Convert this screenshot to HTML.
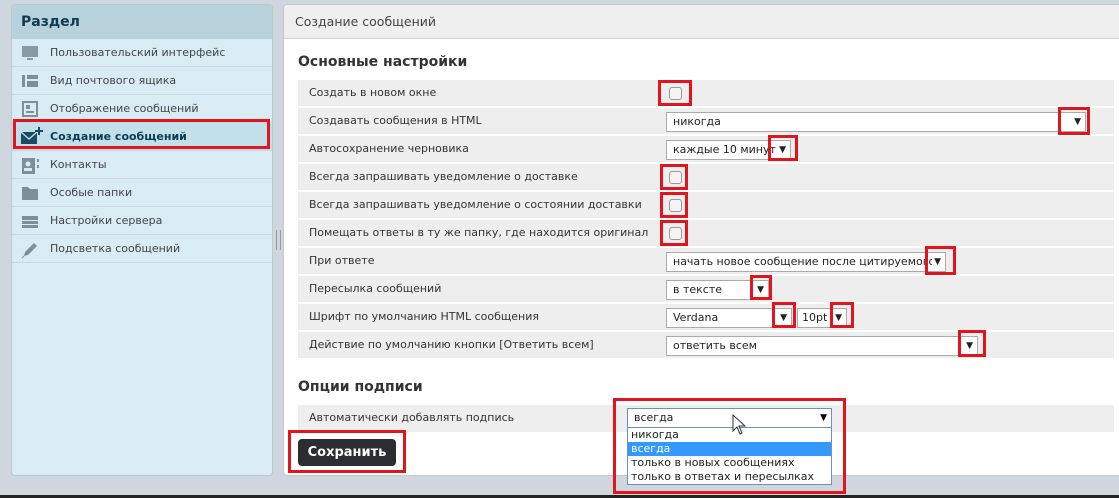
<!DOCTYPE html>
<html><head><meta charset="utf-8"><style>
*{box-sizing:border-box;margin:0;padding:0}
body{width:1119px;height:498px;background:#cfd6de;font-family:Verdana,"DejaVu Sans","Liberation Sans",sans-serif;font-size:11px;color:#333;position:relative;overflow:hidden}
.a{position:absolute}
#left{left:11px;top:4px;width:262px;height:472px;background:#d9ecf3;border:1px solid #b9c9d3;border-radius:4px;overflow:hidden}
#left .h{height:34px;background:#b8d2dc;font-weight:bold;font-size:14px;color:#0d3b52;padding:9px 9px}
.li{height:28px;border-bottom:1px solid #c4d9e2;padding-left:38px;line-height:28px;color:#444;position:relative;white-space:nowrap}
.li svg{position:absolute;left:9px;top:6px}
#right{left:283px;top:4px;width:840px;height:472px;background:#fff;border:1px solid #c2c8d0;border-radius:4px;overflow:hidden}
#right .h{height:34px;background:#efefef;border-bottom:1px solid #d4d4d4;padding:9px 11px;font-size:12.5px;color:#444}
h3{position:absolute;font-size:14px;color:#333;font-weight:bold}
.row{position:absolute;left:298px;width:816px;height:26px;background:#eee;line-height:26px;padding-left:11px;color:#333;white-space:nowrap}
.sel{position:absolute;height:20px;background:#fff;border:1px solid #aaa;line-height:18px;padding-left:6px;padding-right:18px;font-size:11px;color:#222;white-space:nowrap;overflow:hidden}
.sel i{position:absolute;right:4px;top:0;font-style:normal;font-size:9px;background:#fff;padding-left:2px}
.cb{position:absolute;width:13px;height:13px;border:1px solid #999;border-radius:3px;background:#f4f4f4}
.r{position:absolute;border:3px solid #e0161f}
</style></head><body>
<div id="left" class="a"><div class="h">Раздел</div>
<div class="li"><svg width="18" height="16"><rect x="1" y="1" width="16" height="11" fill="#8a9aa3"/><rect x="6" y="13" width="6" height="2" fill="#8a9aa3"/></svg>Пользовательский интерфейс</div>
<div class="li"><svg width="18" height="16"><rect x="1" y="2" width="3" height="12" fill="#7f8f98"/><rect x="6" y="2" width="11" height="4" fill="#7f8f98"/><rect x="6" y="8" width="11" height="6" fill="#7f8f98"/></svg>Вид почтового ящика</div>
<div class="li"><svg width="18" height="16"><rect x="2" y="1" width="14" height="14" fill="none" stroke="#7f8f98" stroke-width="2"/><rect x="5" y="4" width="4" height="4" fill="#7f8f98"/><rect x="5" y="10" width="8" height="2" fill="#7f8f98"/></svg>Отображение сообщений</div>
<div class="li" style="background:#c2e0ea;font-weight:bold;color:#0d3b52"><svg width="24" height="18" style="left:8px;top:4px"><rect x="1" y="5" width="16" height="12" fill="#1c4a60"/><path d="M1 5l8 7 8-7" stroke="#c2e0ea" fill="none" stroke-width="1.3"/><path d="M19 0v8M15 4h8" stroke="#1c4a60" stroke-width="2"/></svg>Создание сообщений</div>
<div class="li"><svg width="18" height="18"><rect x="1" y="1" width="13" height="16" fill="#7f8f98"/><circle cx="7" cy="7" r="2.5" fill="#d9ecf3"/><rect x="3" y="11" width="8" height="3" fill="#d9ecf3"/><rect x="16" y="2" width="2" height="3" fill="#7f8f98"/><rect x="16" y="8" width="2" height="3" fill="#7f8f98"/></svg>Контакты</div>
<div class="li"><svg width="18" height="16"><path d="M1 2h6l2 2h8v11H1z" fill="#7f8f98"/></svg>Особые папки</div>
<div class="li"><svg width="18" height="16"><rect x="1" y="3" width="16" height="4" fill="#7f8f98"/><rect x="1" y="8" width="16" height="3" fill="#7f8f98"/><rect x="1" y="12" width="16" height="3" fill="#7f8f98"/></svg>Настройки сервера</div>
<div class="li"><svg width="18" height="18"><path d="M3 15l1-4 9-9 3 3-9 9z" fill="#7f8f98"/><path d="M1 17l2-2" stroke="#7f8f98"/></svg>Подсветка сообщений</div>
</div>
<div class="a" style="left:276px;top:230px;width:5px;height:20px;border-left:1px solid #999;border-right:1px solid #999"></div>
<div id="right" class="a"><div class="h">Создание сообщений</div></div>
<h3 style="left:298px;top:54px">Основные настройки</h3>
<div class="row" style="top:80px">Создать в новом окне</div>
<div class="row" style="top:108px">Создавать сообщения в HTML</div>
<div class="row" style="top:136px">Автосохранение черновика</div>
<div class="row" style="top:164px">Всегда запрашивать уведомление о доставке</div>
<div class="row" style="top:192px">Всегда запрашивать уведомление о состоянии доставки</div>
<div class="row" style="top:220px">Помещать ответы в ту же папку, где находится оригинал</div>
<div class="row" style="top:248px">При ответе</div>
<div class="row" style="top:276px">Пересылка сообщений</div>
<div class="row" style="top:304px">Шрифт по умолчанию HTML сообщения</div>
<div class="row" style="top:332px">Действие по умолчанию кнопки [Ответить всем]</div>
<div class="cb" style="left:669px;top:87px"></div>
<div class="sel" style="left:666px;top:112px;width:420px">никогда<i>▼</i></div>
<div class="sel" style="left:666px;top:140px;width:125px">каждые 10 минут<i>▼</i></div>
<div class="cb" style="left:669px;top:171px"></div>
<div class="cb" style="left:669px;top:199px"></div>
<div class="cb" style="left:669px;top:227px"></div>
<div class="sel" style="left:666px;top:252px;width:280px">начать новое сообщение после цитируемого<i>▼</i></div>
<div class="sel" style="left:666px;top:280px;width:103px">в тексте<i>▼</i></div>
<div class="sel" style="left:666px;top:308px;width:126px">Verdana<i>▼</i></div>
<div class="sel" style="left:797px;top:308px;width:50px;padding-left:4px;padding-right:12px">10pt<i>▼</i></div>
<div class="sel" style="left:666px;top:336px;width:312px">ответить всем<i>▼</i></div>
<h3 style="left:298px;top:379px">Опции подписи</h3>
<div class="row" style="top:405px;height:27px">Автоматически добавлять подпись</div>
<div class="a" style="left:298px;top:439px;width:98px;height:27px;background:#2b2d30;border-radius:4px;color:#fff;font-weight:bold;font-size:13px;text-align:center;line-height:27px">Сохранить</div>
<div class="a" style="left:0;top:495px;width:1119px;height:3px;background:#222"></div>
<div class="sel" style="left:627px;top:408px;width:205px;border-color:#6b8fc7">всегда<i style="color:#000">▼</i></div>
<div class="a" style="left:627px;top:427px;width:205px;height:58px;background:#fff;border:1px solid #6b8fc7;font-size:11px;line-height:14px;color:#222;white-space:nowrap">
<div style="padding-left:3px">никогда</div><div style="padding-left:3px;background:#3399ff;color:#fff">всегда</div><div style="padding-left:3px">только в новых сообщениях</div><div style="padding-left:3px">только в ответах и пересылках</div></div>
<svg class="a" style="left:732px;top:414px" width="14" height="22"><path d="M1 1v16l4-4 3 7 2-1-3-7h6z" fill="#fff" stroke="#333"/></svg>
<div class="r" style="left:658px;top:80px;width:34px;height:26px"></div>
<div class="r" style="left:1058px;top:107px;width:32px;height:28px"></div>
<div class="r" style="left:768px;top:135px;width:30px;height:26px"></div>
<div class="r" style="left:660px;top:164px;width:28px;height:26px"></div>
<div class="r" style="left:660px;top:192px;width:28px;height:26px"></div>
<div class="r" style="left:660px;top:220px;width:28px;height:26px"></div>
<div class="r" style="left:925px;top:246px;width:31px;height:29px"></div>
<div class="r" style="left:750px;top:275px;width:22px;height:25px"></div>
<div class="r" style="left:772px;top:302px;width:24px;height:26px"></div>
<div class="r" style="left:830px;top:302px;width:24px;height:26px"></div>
<div class="r" style="left:958px;top:330px;width:28px;height:27px"></div>
<div class="r" style="left:613px;top:398px;width:233px;height:96px"></div>
<div class="r" style="left:288px;top:430px;width:118px;height:43px"></div>
<div class="r" style="left:13px;top:119px;width:257px;height:30px"></div>
</body></html>
